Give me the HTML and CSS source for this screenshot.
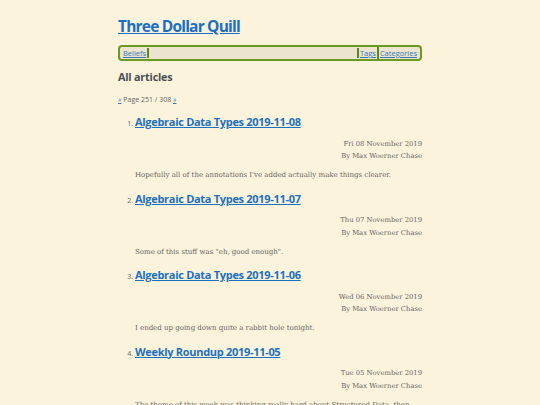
FILE: index.html
```html
<!DOCTYPE html>
<html>
<head>
<meta charset="utf-8">
<link rel="stylesheet" href="styles.css">
</head>
<body>
<div class="page">
  <header class="site-header">
    <h1 class="site-title"><a href="#">Three Dollar Quill</a></h1>
    <nav class="nav">
      <a class="nav-link" href="#">Beliefs</a>
      <span class="nav-fill"></span>
      <a class="nav-link sep-left" href="#">Tags</a>
      <a class="nav-link sep-left" href="#">Categories</a>
    </nav>
  </header>
  <main>
    <h2 class="section-title">All articles</h2>
    <p class="pager"><a href="#">«</a> Page 251 / 308 <a href="#">»</a></p>
    <ol class="articles" start="1">
      <li class="article">
        <h3 class="article-title"><a href="#">Algebraic Data Types 2019-11-08</a></h3>
        <div class="meta"><div>Fri 08 November 2019</div><div>By Max Woerner Chase</div></div>
        <p class="summary">Hopefully all of the annotations I've added actually make things clearer.</p>
      </li>
      <li class="article">
        <h3 class="article-title"><a href="#">Algebraic Data Types 2019-11-07</a></h3>
        <div class="meta"><div>Thu 07 November 2019</div><div>By Max Woerner Chase</div></div>
        <p class="summary">Some of this stuff was "eh, good enough".</p>
      </li>
      <li class="article">
        <h3 class="article-title"><a href="#">Algebraic Data Types 2019-11-06</a></h3>
        <div class="meta"><div>Wed 06 November 2019</div><div>By Max Woerner Chase</div></div>
        <p class="summary">I ended up going down quite a rabbit hole tonight.</p>
      </li>
      <li class="article">
        <h3 class="article-title"><a href="#">Weekly Roundup 2019-11-05</a></h3>
        <div class="meta"><div>Tue 05 November 2019</div><div>By Max Woerner Chase</div></div>
        <p class="summary">The theme of this week was thinking really hard about Structured Data, then focusing on the things I actually wanted to get done.</p>
      </li>
    </ol>
  </main>
</div>
</body>
</html>
```
FILE: styles.css
```css
html, body {
  margin: 0;
  padding: 0;
  background: #fbf3dc;
}
body {
  font-family: "DejaVu Serif", serif;
  color: #555;
}
.page {
  width: 304px;
  margin: 0 auto;
  padding-top: 15px;
}
.site-title {
  margin: 0;
  font-family: "Open Sans", sans-serif;
  font-size: 15.5px;
  font-weight: 700;
  line-height: 22px;
  letter-spacing: -0.8px;
}
a {
  color: #1d70c0;
}
.site-title a {
  color: #1a6fc4;
}
.nav {
  margin-top: 8px;
  display: flex;
  align-items: center;
  border: 2px solid #6a9a1f;
  border-radius: 4px;
  background: #ece4cf;
  height: 12px;
  padding: 0 2px;
  font-family: "Open Sans", sans-serif;
  font-size: 7.5px;
}
.nav-link {
  color: #3a78b8;
  padding: 0 1px;
  line-height: 12px;
}
.nav-fill {
  flex: 1;
  align-self: stretch;
  border-left: 2px solid #5a8a18;
  border-right: 2px solid #5a8a18;
  margin: 1px 0;
}
.sep-left + .sep-left {
  border-left: 2px solid #5a8a18;
}
.section-title {
  margin: 9px 0 0;
  font-family: "Open Sans", sans-serif;
  font-size: 10.8px;
  line-height: 14px;
  font-weight: 700;
  letter-spacing: -0.2px;
  color: #4a4f55;
}
.pager {
  margin: 11px 0 0;
  font-family: "Open Sans", sans-serif;
  font-size: 7px;
  line-height: 10px;
  color: #666;
}
.pager a {
  color: #3a78b8;
}
.articles {
  margin: 10px 0 0;
  padding-left: 17px;
  font-size: 7px;
}
.article {
  font-family: "Open Sans", sans-serif;
  color: #666;
}
.article-title {
  margin: 0;
  font-family: "Open Sans", sans-serif;
  font-size: 11px;
  line-height: 14px;
  font-weight: 700;
  letter-spacing: -0.3px;
}
.meta {
  margin-top: 8.75px;
  text-align: right;
  font-size: 6.8px;
  line-height: 12.5px;
  font-family: "DejaVu Serif", serif;
  color: #666;
}
.summary {
  margin: 6.5px 0 10.25px;
  font-family: "DejaVu Serif", serif;
  font-size: 7px;
  line-height: 12px;
  color: #666;
}
```
